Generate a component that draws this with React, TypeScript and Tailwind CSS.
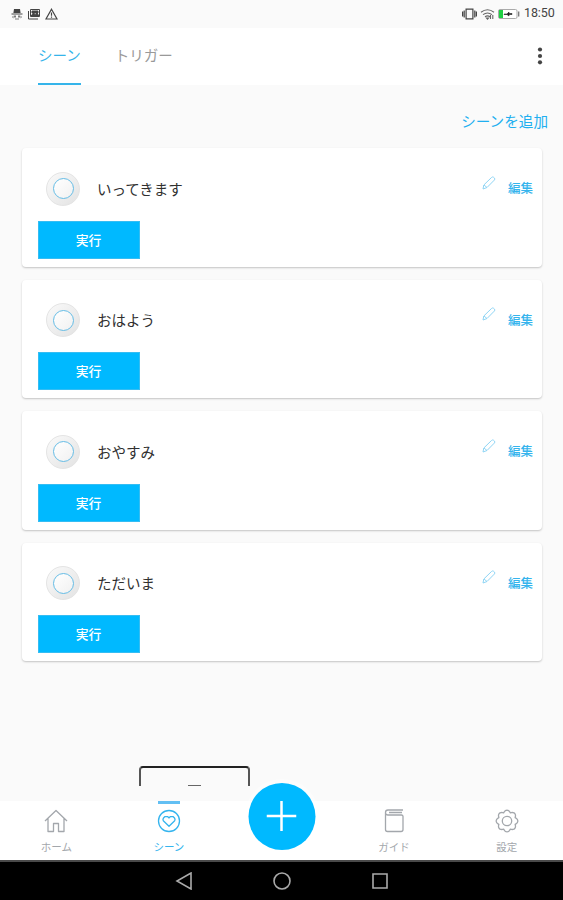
import { useState } from "react";

const scenes = [
  { id: 1, name: "いってきます" },
  { id: 2, name: "おはよう" },
  { id: 3, name: "おやすみ" },
  { id: 4, name: "ただいま" },
];

// wavy outline of the settings gear
const gearPath =
  Array.from({ length: 80 }, (_, i) => {
    const a = (i / 80) * Math.PI * 2;
    const r = 8.8 + 2 * Math.abs(Math.cos(a * 4));
    return `${i ? "L" : "M"}${(12 + r * Math.sin(a)).toFixed(2)} ${(12 - r * Math.cos(a)).toFixed(2)}`;
  }).join("") + "Z";

function StatusBar() {
  return (
    <div className="flex h-7 shrink-0 items-center justify-between bg-[#fafafa] pb-px pl-[11px] pr-2 text-[#444]">
      <div className="flex items-center gap-[5px]">
        <svg width="12" height="12" viewBox="0 0 12 12" fill="currentColor">
          <path d="M3 1h6l.6 4H2.4zM.5 5.4h11v1.1H.5z" />
          <path d="M3 7.5h2v2H3zM7 7.5h2v2H7zM1 9l1.5-1.5v3zM11 9L9.500 7.500v3zM4 10.500h4v1H4z" opacity=".7" />
        </svg>
        <svg width="12" height="12" viewBox="0 0 12 12" fill="none" stroke="currentColor">
          <path d="M2.500 1.500h9v7h-9zM.5 3v8h9.500" />
          <path d="M3 8l2.500-3 2 2L9 5l2 3zM4 3h6v2H4z" fill="currentColor" />
        </svg>
        <svg width="13" height="12" viewBox="0 0 13 12" fill="none" stroke="currentColor" strokeWidth="1.200">
          <path d="M6.500 1.200L12 11H1zM6.500 4.500v3.300M6.500 8.500v1.200" />
        </svg>
      </div>
      <div className="flex items-center">
        <svg width="15" height="12" viewBox="0 0 15 12" fill="none" stroke="currentColor" strokeWidth="1.200">
          <path d="M4.100 1.100h6.800v9.800H4.100zM2.200 2.500v7M.6 3.500v5M12.800 2.500v7M14.400 3.500v5" />
        </svg>
        <svg className="ml-[3px]" width="15" height="12" viewBox="0 0 15 12" fill="none" stroke="#666" strokeWidth="1.100">
          <path d="M1 4.200q6.500-5 13 0M3 6.600q4.500-3.300 9 0M5 8.800q2.500-1.800 5 0" />
          <path d="M6.500 10h2l-1 1.200zM10.500 7v4M12.800 7v4" />
        </svg>
        <svg className="ml-[3px]" width="22" height="12" viewBox="0 0 22 12">
          <rect x=".5" y="1.500" width="18.500" height="9" rx="1.500" fill="#fff" stroke="#aaa" />
          <path d="M1 2h4v8H1z" fill="#1fd043" />
          <path d="M6 6h3l2-2v1.500h3v1h-3V8L9 6.500H6z" fill="#222" stroke="#222" strokeWidth=".6" />
          <path d="M20.700 3.500v5" stroke="#777" strokeWidth="1.300" />
        </svg>
        <span className="ml-1 w-[31px] font-[Roboto] text-[12.5px] leading-none tracking-[-0.1px]">18:50</span>
      </div>
    </div>
  );
}

function SceneCard({ name }: { name: string }) {
  return (
    <div className="h-[118.500px] rounded-[4px] bg-white pl-4 pr-[9px] pt-[24px] shadow-[0_1px_2px_rgba(0,0,0,0.22)]">
      <div className="flex h-[33px] items-center">
        <div className="ml-2 flex size-[34px] items-center justify-center rounded-full border border-[#e4e4e4] bg-linear-to-br from-[#fafafa] to-[#e3e3e3]">
          <div className="size-[21px] rounded-full border-[1.500px] border-[#66bde6] bg-linear-to-br from-white to-[#f1f1f1]" />
        </div>
        <span className="ml-[17px] text-[14.500px] text-[#303030]">{name}</span>
        <button className="ml-auto flex items-center text-[12.500px] font-medium text-[#35b4ed]">
          <svg className="mb-3 mr-3" width="14" height="14" viewBox="0 0 14 14" fill="none" stroke="#8fd5f5" strokeWidth="1">
            <path d="M1 13l.8-4L9.500 1.500q1-1 2.200-.2l.8.800q.8 1-.2 2L5 11.500zM2 9l3 2.500" />
          </svg>
          編集
        </button>
      </div>
      <button className="-ml-[0.500px] mt-[15.500px] block h-[38px] w-[102px] border border-[#35bdf3] bg-[#00b9ff] text-[12.800px] font-medium text-white">
        実行
      </button>
    </div>
  );
}

function NavItem({ label, active, children }: { label: string; active?: boolean; children: React.ReactNode }) {
  return (
    <button className={`flex flex-1 flex-col items-center text-[10.500px] leading-[14px] ${active ? "text-[#35b4ee]" : "text-[#a3a7ac]"}`}>
      <span className={`h-[3px] w-[22px] ${active ? "bg-[#62bff3]" : ""}`} />
      <svg className="mb-[7px] mt-[5px]" width="24" height="24" viewBox="0 0 24 24" fill="none" stroke="currentColor" strokeWidth="1.300">
        {children}
      </svg>
      {label}
    </button>
  );
}

export default function App() {
  const [tab, setTab] = useState("シーン");

  return (
    <div className="flex h-[900px] w-[563px] flex-col overflow-hidden bg-[#fafafa] font-['Noto_Sans_CJK_JP',sans-serif]">
      <StatusBar />

      <header className="flex h-[57px] shrink-0 items-stretch bg-white pl-[38px] pr-[18px] text-[14.500px]">
        {["シーン", "トリガー"].map((t) => (
          <button
            key={t}
            onClick={() => setTab(t)}
            className={`mr-[34px] border-b-2 pb-0.5 ${tab === t ? "border-[#35b4ea] text-[#35b4ea]" : "border-transparent text-[#999]"}`}
          >
            {t}
          </button>
        ))}
        <svg className="mb-[2px] ml-auto self-center" width="10" height="20" viewBox="0 0 10 20" fill="#444">
          <circle cx="5" cy="3.500" r="2.100" />
          <circle cx="5" cy="10" r="2.100" />
          <circle cx="5" cy="16.300" r="2.100" />
        </svg>
      </header>

      <main className="flex flex-1 flex-col pl-[22px] pr-[21px]">
        <button className="-mr-[6px] mt-[25px] self-end text-[14.600px] leading-[22px] text-[#20aff0]">シーンを追加</button>
        <div className="mt-4 flex flex-col gap-[13px]">
          {scenes.map((s) => (
            <SceneCard key={s.id} name={s.name} />
          ))}
        </div>
        <div className="mb-[15px] ml-[117px] mt-auto flex h-5 w-[111px] items-end justify-center rounded-t-[4px] border-2 border-b-0 border-[#555] border-t-[#222]">
          <span className="h-[1.500px] w-[13px] bg-[#666]" />
        </div>
      </main>

      <nav className="relative flex h-[59px] shrink-0 bg-white">
        <NavItem label="ホーム">
          <path d="M1 12L12 1.500 23 12M4 9.500V22.500h5.500v-8h5v8H20V9.500" strokeLinejoin="round" />
        </NavItem>
        <NavItem label="シーン" active>
          <circle cx="12" cy="12" r="10.500" />
          <path d="M12 17.300L6.300 11.800Q5.500 10.300 6.500 9L8 7.600h2.600L12 8.900l1.400-1.300H16L17.500 9q1 1.300.2 2.800z" strokeLinejoin="round" />
        </NavItem>
        <div className="flex-1" />
        <NavItem label="ガイド">
          <path d="M21 1H6Q3.500 1 3.500 3.500V20.500q0 2 2 2H19q2 0 2-2V7.500q0-1.500-1.500-1.500H6Q3.500 6 3.500 3.500M7 3.500h13" />
        </NavItem>
        <NavItem label="設定">
          <path d={gearPath} strokeLinejoin="round" />
          <circle cx="12" cy="12" r="4.700" />
        </NavItem>
        <button className="absolute left-1/2 top-[-18.500px] flex size-[67px] -translate-x-1/2 items-center justify-center rounded-full bg-[#00b9ff] shadow-[0_0_0_4px_rgba(255,255,255,0.4)]">
          <svg width="30" height="30" viewBox="0 0 30 30" stroke="#fff" strokeWidth="2.500">
            <path d="M15 0v30M0 15h30" />
          </svg>
        </button>
      </nav>

      <div className="flex h-10 shrink-0 items-center justify-center gap-[80px] border-t-2 border-[#4a4a4a] bg-black">
        <svg width="18" height="18" viewBox="0 0 18 18" fill="none" stroke="#aaa" strokeWidth="1.600">
          <path d="M16 1v16L2 9z" />
        </svg>
        <svg width="18" height="18" viewBox="0 0 18 18" fill="none" stroke="#aaa" strokeWidth="1.600">
          <circle cx="9" cy="9" r="8" />
        </svg>
        <svg width="18" height="18" viewBox="0 0 18 18" fill="none" stroke="#aaa" strokeWidth="1.600">
          <path d="M2 2h14v14H2z" />
        </svg>
      </div>
    </div>
  );
}
